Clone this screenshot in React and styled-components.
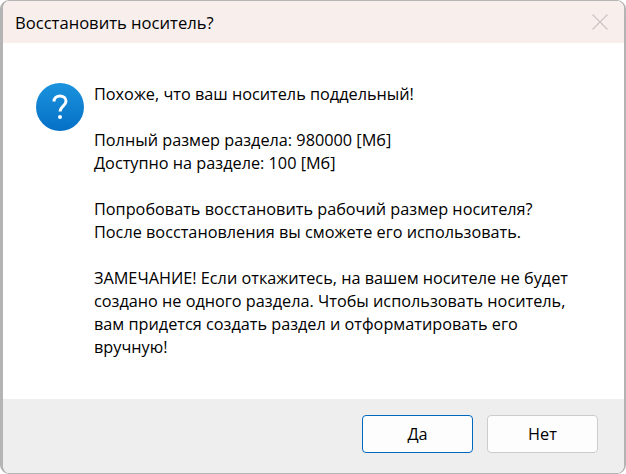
import React from 'react'
import styled, { createGlobalStyle } from 'styled-components'

const Global = createGlobalStyle`
  html, body {
    margin: 0;
    padding: 0;
    background: #fff;
  }
`

const Window = styled.div`
  width: 626px;
  height: 474px;
  box-sizing: border-box;
  display: flex;
  flex-direction: column;
  overflow: hidden;
  border-radius: 9px;
  border: solid #b4b4b4;
  border-width: 1px 2px 1px 3px;
  font-family: "Open Sans", "Noto Sans", sans-serif;
  color: #000;
`

const TitleBar = styled.div`
  height: 42px;
  flex: none;
  display: flex;
  align-items: center;
  justify-content: space-between;
  padding: 0 16px 0 12px;
  background: #f8efed;
  font-size: 16.6px;
`

const CloseIcon = styled.svg`
  width: 16px;
  height: 16px;
  stroke: #c9c5c4;
  stroke-width: 1.2;
`

const Body = styled.div`
  flex: 1;
  display: flex;
  gap: 10px;
  padding: 40px 32px 0 33px;
  background: #fff;
`

const Message = styled.div`
  font-size: 16.25px;
  line-height: 23px;
`

const Para = styled.p`
  margin: 0 0 23px;
  white-space: pre-line;
`

const Footer = styled.div`
  height: 74px;
  flex: none;
  display: flex;
  justify-content: flex-end;
  gap: 14px;
  padding: 16px 26px 0 0;
  box-sizing: border-box;
  background: #eeeeee;
`

const Button = styled.button`
  width: 111px;
  height: 38px;
  background: #fdfdfd;
  border: 1px solid ${p => (p.$primary ? '#0067c0' : '#cccccc')};
  border-radius: 4px;
  font-family: inherit;
  font-size: 16.25px;
  color: #000;
  padding: 0;
`

const QuestionSvg = styled.svg`
  width: 48px;
  height: 48px;
  flex: none;
`

const QuestionIcon = () => (
  <QuestionSvg viewBox='0 0 48 48'>
    <defs>
      <linearGradient id='q' x1='0' y1='0' x2='0' y2='1'>
        <stop offset='0' stopColor='#1b93dd' />
        <stop offset='1' stopColor='#0570c6' />
      </linearGradient>
    </defs>
    <circle cx='24' cy='24' r='24' fill='url(#q)' />
    <path
      d='M18 18.500c0-3.400 2.700-5.500 6-5.500s6 2.100 6 5.200c0 4.800-6 5-6 10.300'
      fill='none'
      stroke='#fff'
      strokeWidth='3'
    />
    <circle cx='24' cy='34' r='2' fill='#fff' />
  </QuestionSvg>
)

export default function App () {
  return (
    <>
      <Global />
      <Window>
        <TitleBar>
          <span>Восстановить носитель?</span>
          <CloseIcon viewBox='0 0 16 16'>
            <path d='M.5.5l15 15M15.500.5l-15 15' />
          </CloseIcon>
        </TitleBar>
        <Body>
          <QuestionIcon />
          <Message>
            <Para>Похоже, что ваш носитель поддельный!</Para>
            <Para>{'Полный размер раздела: 980000 [Мб]\nДоступно на разделе: 100 [Мб]'}</Para>
            <Para>{'Попробовать восстановить рабочий размер носителя?\nПосле восстановления вы сможете его использовать.'}</Para>
            <Para>{'ЗАМЕЧАНИЕ! Если откажитесь, на вашем носителе не будет\nсоздано не одного раздела. Чтобы использовать носитель,\nвам придется создать раздел и отформатировать его\nвручную!'}</Para>
          </Message>
        </Body>
        <Footer>
          <Button $primary>Да</Button>
          <Button>Нет</Button>
        </Footer>
      </Window>
    </>
  )
}
